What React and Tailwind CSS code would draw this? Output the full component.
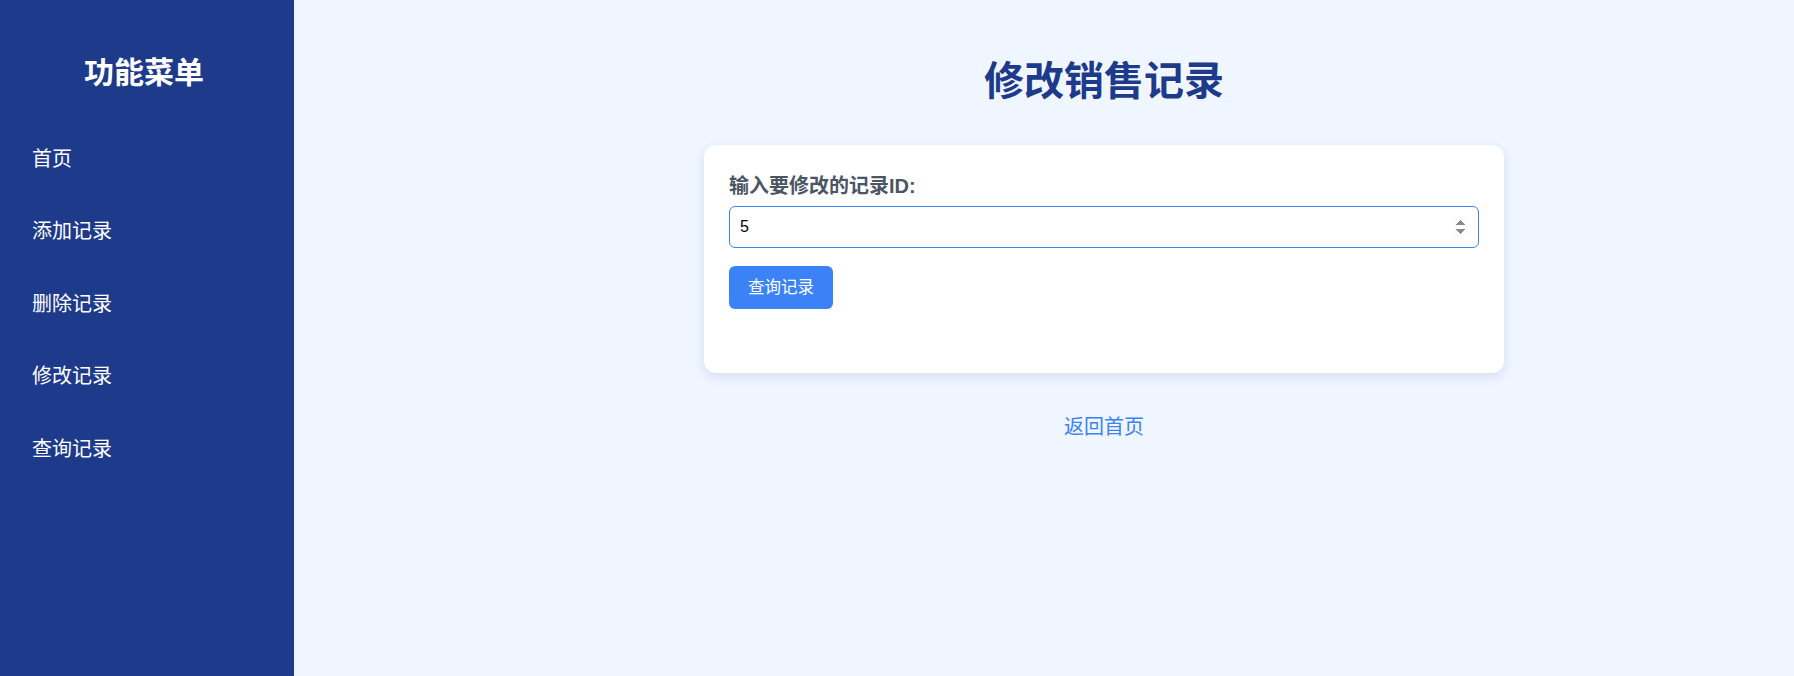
import { useState } from "react";

const menu = ["首页", "添加记录", "删除记录", "修改记录", "查询记录"];

export default function App() {
  const [recordId, setRecordId] = useState("5");

  return (
    <div
      className="flex min-h-screen bg-[#eff6ff]"
      style={{ fontFamily: '"Liberation Sans", "Noto Sans CJK SC", sans-serif' }}
    >
      {/* Sidebar */}
      <aside className="w-[294px] shrink-0 bg-[#1e3a8a] text-white pt-[55px]">
        <h2 className="text-center text-[30px] leading-[36px] font-bold mb-[31.5px] pr-[6px]">功能菜单</h2>
        <nav>
          {menu.map((item) => (
            <a key={item} href="#" className="flex items-center h-[72.5px] pl-[32px] text-[20px] text-white">
              {item}
            </a>
          ))}
        </nav>
      </aside>

      {/* Main */}
      <main className="flex-1 pl-[120px] pt-[57px] flex flex-col items-center">
        <h1 className="text-[40px] leading-[48px] font-bold text-[#1e3a8a]">修改销售记录</h1>

        <div className="mt-[40px] w-[800px] bg-white rounded-xl shadow-[0_4px_12px_rgba(30,58,138,0.12)] px-[25px] pt-[26px] pb-[64px]">
          <label className="block text-[20px] leading-[30px] font-bold text-[#4b5563] mb-[5px]">
            输入要修改的记录ID:
          </label>
          <input
            type="number"
            autoFocus
            value={recordId}
            onChange={(e) => setRecordId(e.target.value)}
            className="block w-full h-[42px] px-[10px] text-[16px] text-black border border-[#3b82f6] rounded-md outline-none"
          />
          <button className="mt-[18px] h-[43px] px-[19px] bg-[#3b82f6] text-white text-[16.5px] rounded-md">
            查询记录
          </button>
        </div>

        <a href="#" className="mt-[42px] text-[20px] leading-[24px] text-[#3b82f6]">
          返回首页
        </a>
      </main>
    </div>
  );
}
